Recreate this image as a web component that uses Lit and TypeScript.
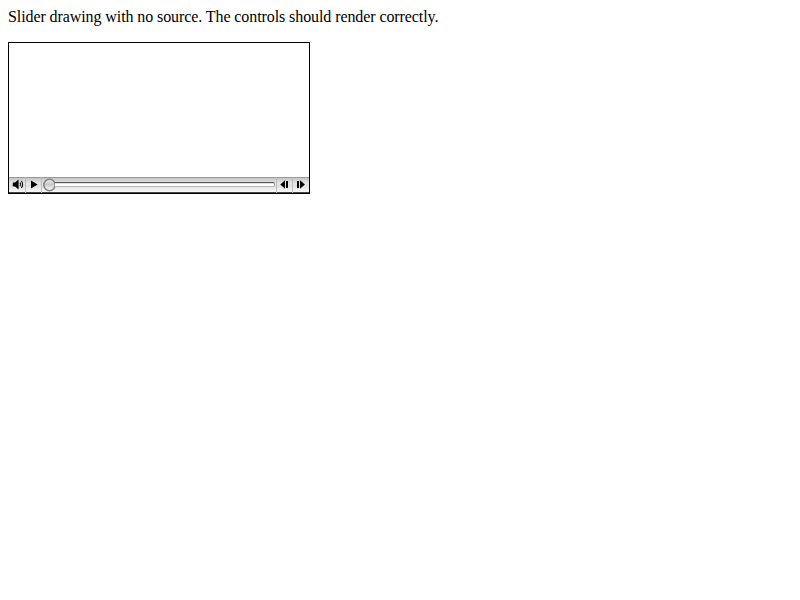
import { LitElement, html, css, svg } from "lit";
import { customElement } from "lit/decorators.js";

const glyphs = {
  volume: svg`<path d="M3.8 5.4h2.2L9.6 2.6v9.8L6 9.6H3.8z"/><path d="M11 5.6q1.3 1.9 0 3.8M12.4 4q2.4 3.5 0 7" fill="none" stroke="#000" stroke-width="1.1"/>`,
  play: svg`<path d="M6 3.6l6.6 3.9L6 11.4z"/>`,
  back: svg`<path d="M8 3.2v8.6L3.3 7.5zM9 4h2v7H9z"/>`,
  forward: svg`<path d="M4 4h2v7H4zM7 3.2l4.9 4.3L7 11.8z"/>`,
};

@customElement("media-button")
class MediaButton extends LitElement {
  static properties = { icon: {} };
  declare icon: keyof typeof glyphs;
  static styles = css`
    :host {
      display: block;
      box-sizing: border-box;
      width: 16px;
      height: 16px;
    }
    svg { display: block; }
  `;
  render() {
    return html`<svg width="16" height="16" viewBox="0 0 16 16">${glyphs[this.icon]}</svg>`;
  }
}

@customElement("app-root")
class AppRoot extends LitElement {
  static styles = css`
    :host {
      display: block;
      padding: 8px;
      font: 16px/18px "Liberation Serif", serif;
      color: #000;
    }
    .caption {
      margin: 0 0 16px;
      white-space: nowrap;
      letter-spacing: -0.088px;
    }
    .player {
      box-sizing: border-box;
      width: 302px;
      height: 152px;
      border: 1px solid #000;
      display: flex;
      flex-direction: column;
      justify-content: flex-end;
    }
    .controls {
      display: flex;
      height: 16px;
      background: linear-gradient(#999 0 1px, #c4c4c4 1px, #d8d8d8 4px, #e8e8e8 7px, #dedede 8px, #f8f8f8 15px, #444 15px);
    }
    .divided { box-shadow: inset 1px 0 #bdbdbd; }
    .timeline {
      flex: 1;
      display: flex;
      align-items: center;
      box-shadow: inset 1px 0 #bdbdbd, inset -1px 0 #bdbdbd;
    }
    .ruled { box-shadow: inset -1px 0 #bdbdbd; }
    .knob { display: block; margin-left: 1px; }
    .track {
      box-sizing: border-box;
      flex: 1;
      height: 5px;
      margin: 0 2px 1px -1px;
      border: 1px solid #bbb;
      border-top-color: #555;
      border-left: 0;
      border-right: 1px solid #999;
      border-radius: 0 2px 2px 0;
      background: linear-gradient(#e0e0e0 1px, #fff 1px);
    }
  `;
  render() {
    return html`
      <p class="caption">Slider drawing with no source. The controls should render correctly.</p>
      <div class="player">
        <div class="controls">
          <media-button icon="volume"></media-button>
          <media-button class="divided" icon="play"></media-button>
          <div class="timeline">
            <svg class="knob" width="14" height="16" viewBox="0 0 14 16">
              <defs>
                <linearGradient id="face" x2="0" y2="1">
                  <stop offset="0" stop-color="#eee" />
                  <stop offset=".45" stop-color="#c8c8c8" />
                  <stop offset="1" stop-color="#fff" />
                </linearGradient>
              </defs>
              <circle cx="7.5" cy="8" r="5.7" fill="url(#face)" stroke="#848484" stroke-width="1.6" />
            </svg>
            <div class="track"></div>
          </div>
          <media-button class="ruled" icon="back"></media-button>
          <media-button icon="forward"></media-button>
        </div>
      </div>
    `;
  }
}
